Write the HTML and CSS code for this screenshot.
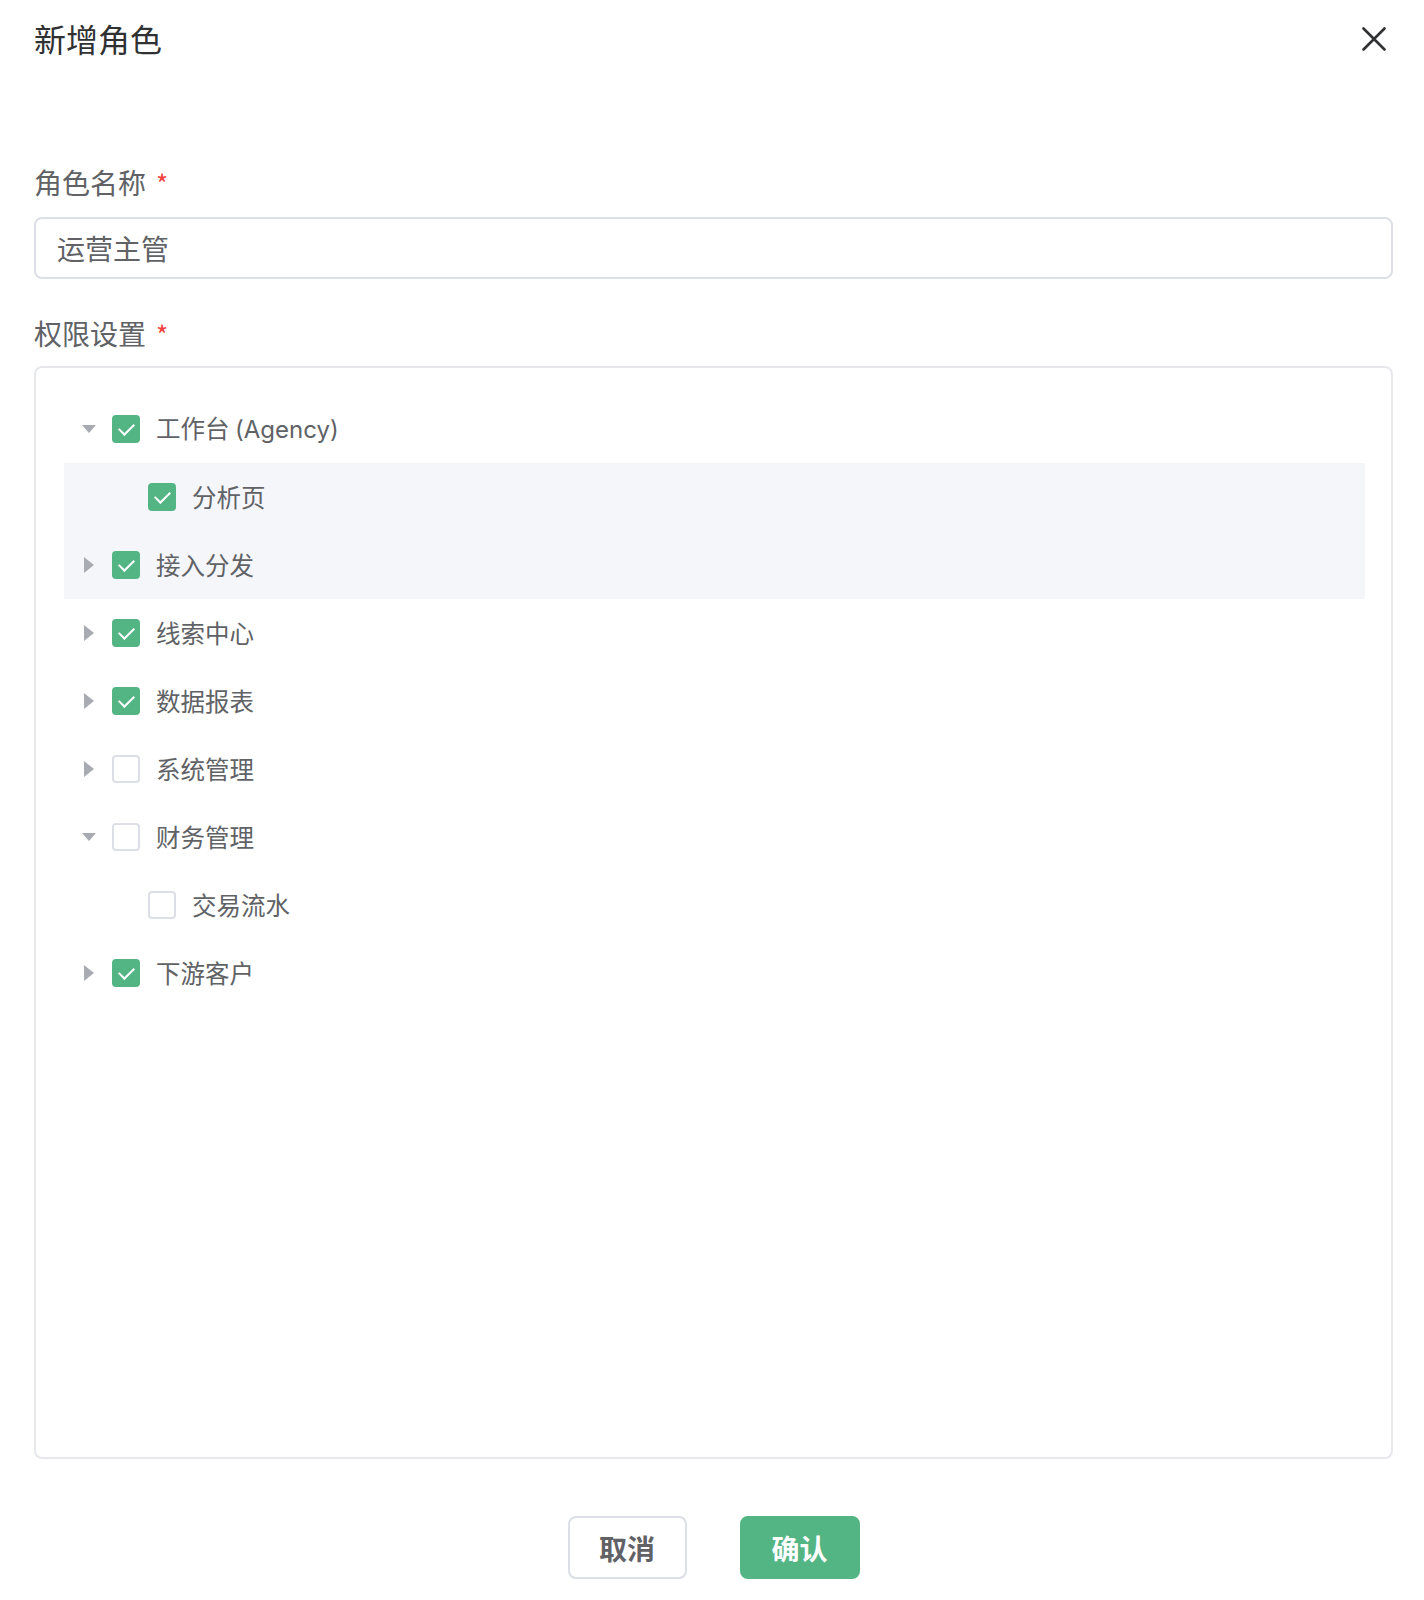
FILE: index.html
```html
<!DOCTYPE html>
<html lang="zh-CN">
<head>
<meta charset="utf-8">
<title>新增角色</title>
<link rel="stylesheet" href="styles.css">
</head>
<body>
<div class="dialog">
  <div class="header">
    <span class="title">新增角色</span>
    <span class="close">
      <svg width="24" height="24" viewBox="0 0 24 24"><path d="M1.5 1.5L22.5 22.5M22.5 1.5L1.5 22.5" stroke="#303133" stroke-width="2.6" stroke-linecap="round" fill="none"/></svg>
    </span>
  </div>

  <div class="form-item first">
    <div class="label">角色名称<span class="req">*</span></div>
    <div class="input">运营主管</div>
  </div>

  <div class="form-item second">
    <div class="label">权限设置<span class="req">*</span></div>
    <div class="tree">
      <div class="node"><span class="caret down"></span><span class="cb on"></span><span class="txt">工作台 <span class="latin">(Agency)</span></span></div>
      <div class="node l2 hl"><span class="caret none"></span><span class="cb on"></span><span class="txt">分析页</span></div>
      <div class="node hl"><span class="caret right"></span><span class="cb on"></span><span class="txt">接入分发</span></div>
      <div class="node"><span class="caret right"></span><span class="cb on"></span><span class="txt">线索中心</span></div>
      <div class="node"><span class="caret right"></span><span class="cb on"></span><span class="txt">数据报表</span></div>
      <div class="node"><span class="caret right"></span><span class="cb"></span><span class="txt">系统管理</span></div>
      <div class="node"><span class="caret down"></span><span class="cb"></span><span class="txt">财务管理</span></div>
      <div class="node l2"><span class="caret none"></span><span class="cb"></span><span class="txt">交易流水</span></div>
      <div class="node"><span class="caret right"></span><span class="cb on"></span><span class="txt">下游客户</span></div>
    </div>
  </div>

  <div class="footer">
    <button class="btn cancel">取消</button>
    <button class="btn ok">确认</button>
  </div>
</div>
</body>
</html>
```

FILE: styles.css
```css
* { box-sizing: border-box; }
html, body {
  margin: 0;
  padding: 0;
  background: #ffffff;
}
body {
  font-family: "Noto Sans CJK SC", "Noto Sans", sans-serif;
  color: #606266;
}
.dialog {
  padding: 0 31px 0 34px;
}
.header {
  display: flex;
  justify-content: space-between;
  align-items: center;
  padding-top: 21px;
  height: 55px;
}
.title {
  font-size: 32px;
  line-height: 32px;
  color: #303133;
}
.close {
  display: flex;
  width: 24px;
  height: 24px;
  margin-right: 7px;
  margin-top: 2px;
}
.form-item.first { margin-top: 107px; }
.form-item.second { margin-top: 34px; }
.label {
  font-size: 28px;
  line-height: 40px;
  height: 40px;
  color: #606266;
  margin-bottom: 15px;
}
.form-item.second .label { margin-bottom: 13px; }
.req {
  color: #f0413b;
  margin-left: 10px;
  font-size: 26px;
}
.input {
  height: 62px;
  border: 2px solid #dcdfe6;
  border-radius: 8px;
  padding: 0 21px;
  font-size: 28px;
  line-height: 58px;
  color: #606266;
}
.tree {
  height: 1093px;
  border: 2px solid #e6e8ec;
  border-radius: 8px;
  padding: 27px 26px 0 28px;
}
.node {
  display: flex;
  align-items: center;
  height: 68px;
}
.node.l2 { padding-left: 36px; }
.node.hl { background: #f5f6fa; }
.caret {
  width: 48px;
  height: 28px;
  display: flex;
  align-items: center;
  justify-content: center;
  padding-left: 2px;
}
.caret.down::before {
  content: "";
  width: 0;
  height: 0;
  border-left: 7px solid transparent;
  border-right: 7px solid transparent;
  border-top: 8px solid #a8abb2;
}
.caret.right::before {
  content: "";
  width: 0;
  height: 0;
  border-top: 8px solid transparent;
  border-bottom: 8px solid transparent;
  border-left: 10px solid #a8abb2;
}
.cb {
  width: 28px;
  height: 28px;
  border: 2px solid #dcdfe6;
  border-radius: 4px;
  background: #ffffff;
  position: relative;
  flex: none;
}
.cb.on {
  background: #53b584;
  border-color: #53b584;
}
.cb.on::after {
  content: "";
  position: absolute;
  left: 8px;
  top: 3px;
  width: 7px;
  height: 13px;
  border-right: 2.5px solid #ffffff;
  border-bottom: 2.5px solid #ffffff;
  transform: rotate(45deg);
  transform-origin: center;
}
.txt {
  margin-left: 16px;
  font-size: 24.5px;
  line-height: 36px;
  color: #606266;
}
.latin {
  font-family: "Inter", "Noto Sans", sans-serif;
  font-size: 24px;
}
.footer {
  display: flex;
  justify-content: center;
  gap: 53px;
  margin-top: 57px;
}
.btn {
  font-family: "Noto Sans CJK SC", sans-serif;
  height: 63px;
  border-radius: 8px;
  font-size: 28px;
  font-weight: bold;
  padding: 0;
  cursor: pointer;
}
.btn.cancel {
  width: 119px;
  background: #ffffff;
  border: 2px solid #dcdfe6;
  color: #606266;
}
.btn.ok {
  width: 120px;
  background: #53b584;
  border: 2px solid #53b584;
  color: #ffffff;
}
```
